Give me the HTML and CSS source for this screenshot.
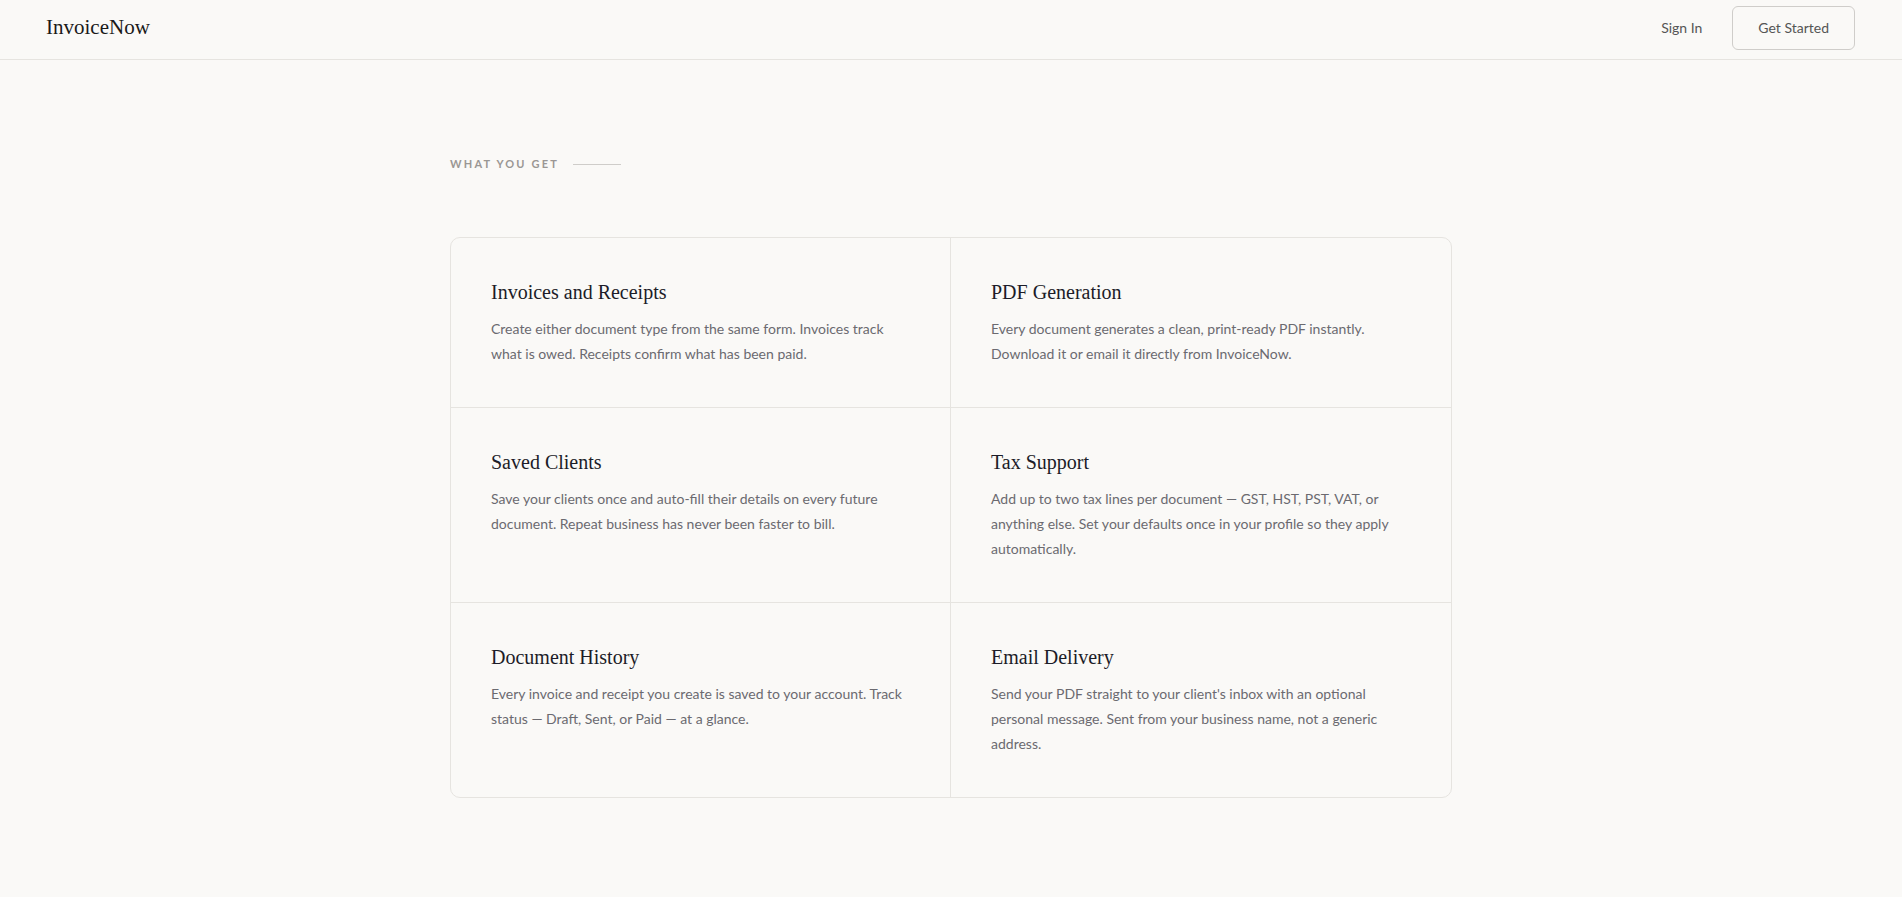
FILE: index.html
```html
<!DOCTYPE html>
<html lang="en">
<head>
    <meta charset="UTF-8">
    <meta name="viewport" content="width=device-width, initial-scale=1.0">
    <title>InvoiceNow</title>
    <link rel="stylesheet" href="styles.css">
</head>
<body>
    <header class="site-header">
        <a class="logo" href="#">InvoiceNow</a>
        <nav class="nav">
            <a class="nav-link" href="#">Sign In</a>
            <a class="btn-outline" href="#">Get Started</a>
        </nav>
    </header>

    <main class="features-section">
        <div class="container">
            <div class="eyebrow">
                <span>What You Get</span>
                <span class="eyebrow-line"></span>
            </div>

            <div class="features">
                <div class="feature">
                    <h3>Invoices and Receipts</h3>
                    <p>Create either document type from the same form. Invoices track what is owed. Receipts confirm what has been paid.</p>
                </div>
                <div class="feature">
                    <h3>PDF Generation</h3>
                    <p>Every document generates a clean, print-ready PDF instantly. Download it or email it directly from InvoiceNow.</p>
                </div>
                <div class="feature">
                    <h3>Saved Clients</h3>
                    <p>Save your clients once and auto-fill their details on every future document. Repeat business has never been faster to bill.</p>
                </div>
                <div class="feature">
                    <h3>Tax Support</h3>
                    <p>Add up to two tax lines per document — GST, HST, PST, VAT, or anything else. Set your defaults once in your profile so they apply automatically.</p>
                </div>
                <div class="feature">
                    <h3>Document History</h3>
                    <p>Every invoice and receipt you create is saved to your account. Track status — Draft, Sent, or Paid — at a glance.</p>
                </div>
                <div class="feature">
                    <h3>Email Delivery</h3>
                    <p>Send your PDF straight to your client's inbox with an optional personal message. Sent from your business name, not a generic address.</p>
                </div>
            </div>
        </div>
    </main>
</body>
</html>
```

FILE: styles.css
```css
* {
    box-sizing: border-box;
}

body {
    margin: 0;
    background-color: #faf9f7;
    color: #1c1c24;
    font-family: Lato, 'Noto Sans', sans-serif;
}

a {
    text-decoration: none;
    color: inherit;
}

.site-header {
    height: 60px;
    padding: 0 47px 0 46px;
    display: flex;
    align-items: center;
    justify-content: space-between;
    border-bottom: 1px solid #e6e4e0;
}

.logo {
    font-family: 'Liberation Serif', serif;
    font-size: 21px;
    color: #1a1a1a;
    margin-top: -4px;
}

.nav {
    display: flex;
    align-items: center;
    gap: 30px;
    margin-top: -4px;
}

.nav-link {
    font-size: 14px;
    color: #555555;
}

.btn-outline {
    font-size: 14px;
    color: #555555;
    border: 1px solid #cfcdca;
    border-radius: 6px;
    padding: 13px 25px;
    line-height: 16px;
}

.features-section {
    padding: 96px 0 80px;
}

.container {
    width: 1002px;
    margin: 0 auto;
}

.eyebrow {
    display: flex;
    align-items: center;
    gap: 14px;
    font-size: 11px;
    font-weight: 700;
    letter-spacing: 2.2px;
    text-transform: uppercase;
    color: #9a9794;
    line-height: 16px;
    margin-bottom: 65px;
}

.eyebrow-line {
    width: 48px;
    height: 1px;
    background-color: #cfcdca;
}

.features {
    display: grid;
    grid-template-columns: 1fr 1fr;
    border: 1px solid #e6e4e0;
    border-radius: 10px;
    overflow: hidden;
}

.feature {
    padding: 41px 40px 41px;
    border-bottom: 1px solid #e6e4e0;
}

.feature:nth-child(odd) {
    border-right: 1px solid #e6e4e0;
}

.feature:nth-last-child(-n+2) {
    border-bottom: none;
}

.feature h3 {
    margin: 0 0 11px;
    font-family: 'Liberation Serif', serif;
    font-weight: 400;
    font-size: 20px;
    line-height: 26px;
    color: #1c1c28;
}

.feature p {
    margin: 0;
    font-size: 14px;
    line-height: 25px;
    color: #6b6a70;
}
```
